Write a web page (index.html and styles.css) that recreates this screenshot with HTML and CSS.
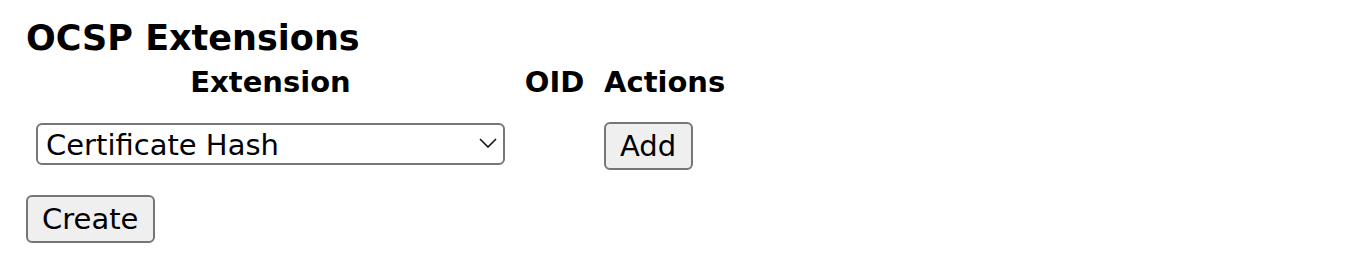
FILE: index.html
```html
<!DOCTYPE html>
<html lang="en">
  <head>
    <title>OCSP Extensions</title>
    <link rel="stylesheet" href="styles.css">
  </head>
  <body>
    <h3 class="title">OCSP Extensions</h3>

    <form class="ext-form">
      <table class="ext-table">
        <tr>
          <th>Extension</th>
          <th class="oid-col">OID</th>
          <th>Actions</th>
        </tr>
        <tr>
          <td>
            <span class="select-wrap">
              <select class="ext-select" name="extension">
                <option>Certificate Hash</option>
                <option>Nonce</option>
                <option>Archive Cutoff</option>
              </select>
              <!-- dropdown arrow -->
              <svg class="select-arrow" width="18" height="10" viewBox="0 0 18 10">
                <path d="M1 1 L9 9 L17 1" fill="none" stroke="#111" stroke-width="1.6" />
              </svg>
            </span>
          </td>
          <td></td>
          <td><button type="button" class="btn">Add</button></td>
        </tr>
      </table>

      <button type="submit" class="btn create-button">Create</button>
    </form>
  </body>
</html>
```

FILE: styles.css
```css
body {
  margin: 0;
  padding: 18px 26px;
  background-color: white;
  color: black;
  font-family: "DejaVu Sans", Verdana, sans-serif;
  font-size: 29px;
}
.title {
  font-size: 35px;
  font-weight: bold;
  margin: 0 0 1px 0;
}
.ext-table {
  border-spacing: 4px;
  margin-left: -1px;
}
.ext-table th {
  font-weight: bold;
  padding: 2px 7px;
}
.oid-col {
  width: 63px;
}
.ext-table td {
  padding: 17px 7px 8px 7px;
  vertical-align: top;
}
.select-wrap {
  position: relative;
  display: inline-block;
}
.ext-select {
  display: block;
  width: 469px;
  height: 42px;
  margin-top: 1px;
  font-family: inherit;
  font-size: 29px;
  color: black;
  background-color: white;
  border: 2px solid #767676;
  border-radius: 6px;
  padding: 1px 8px 0 8px;
  appearance: none;
  -webkit-appearance: none;
}
.select-arrow {
  position: absolute;
  right: 8px;
  top: 16px;
  pointer-events: none;
}
.btn {
  font-family: inherit;
  font-size: 29px;
  color: black;
  background-color: #efefef;
  border: 2px solid #767676;
  border-radius: 6px;
  padding: 5px 15px 5px 14px;
  cursor: pointer;
}
.create-button {
  margin-top: 13px;
}
```
